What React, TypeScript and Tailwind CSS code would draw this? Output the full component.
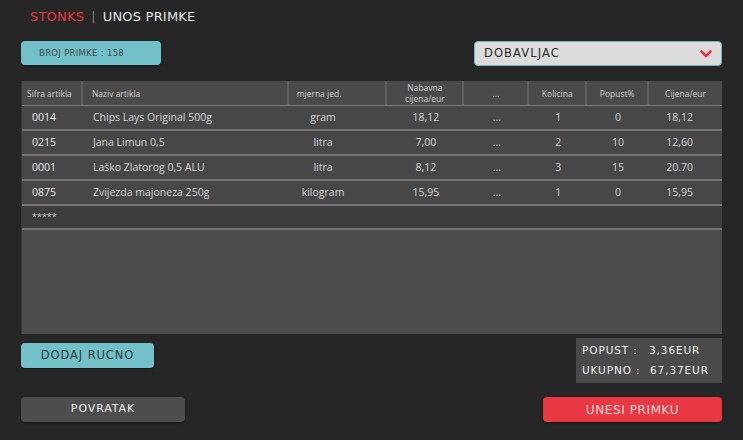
import React from "react";

const display = { fontFamily: '"DejaVu Sans", "Liberation Sans", sans-serif' };
const body = { fontFamily: '"Open Sans", "Noto Sans", sans-serif' };

interface Column {
  label: string[];
  width: string;
  head: string;
  cell: string;
}

const columns: Column[] = [
  { label: ["Sifra artikla"], width: "w-[61px]", head: "justify-start pl-[5px]", cell: "justify-start pl-[10px] text-[#f0f0f0]" },
  { label: ["Naziv artikla"], width: "w-[206px]", head: "justify-start pl-[9px]", cell: "justify-start pl-[10px]" },
  { label: ["mjerna jed."], width: "w-[99px]", head: "justify-start pl-[8px]", cell: "justify-center pr-[30px]" },
  { label: ["Nabavna", "cijena/eur"], width: "w-[77px]", head: "justify-center", cell: "justify-center" },
  { label: ["..."], width: "w-[65px]", head: "justify-center", cell: "justify-center" },
  { label: ["Kolicina"], width: "w-[58px]", head: "justify-center", cell: "justify-center" },
  { label: ["Popust%"], width: "w-[62px]", head: "justify-center", cell: "justify-center" },
  { label: ["Cijena/eur"], width: "w-[73px]", head: "justify-center", cell: "justify-center pr-[12px]" },
];

const rows = [
  ["0014", "Chips Lays Original 500g", "gram", "18,12", "...", "1", "0", "18,12"],
  ["0215", "Jana Limun 0,5", "litra", "7,00", "...", "2", "10", "12,60"],
  ["0001", "Laško Zlatorog 0,5 ALU", "litra", "8,12", "...", "3", "15", "20.70"],
  ["0875", "Zvijezda majoneza 250g", "kilogram", "15,95", "...", "1", "0", "15,95"],
];

function Chevron() {
  return (
    <svg width="12" height="8" viewBox="0 0 12 8" fill="none">
      <path d="M1.5 1.5 L6 6 L10.5 1.5" stroke="#e8383f" strokeWidth="2.6" strokeLinecap="round" strokeLinejoin="round" />
    </svg>
  );
}

export default function App() {
  return (
    <div className="w-[743px] h-[440px] bg-[#262626] px-[21px] flex flex-col overflow-hidden" style={display}>
      {/* title */}
      <div className="h-[33px] pl-[9px] flex items-center text-[13px] tracking-[0.2px]">
        <span className="text-[#e8383f]">STONKS</span>
        <span className="text-[#bdbdbd] mx-[7px] font-light">|</span>
        <span className="text-[#e6e6e6]">UNOS PRIMKE</span>
      </div>

      {/* top controls */}
      <div className="mt-[8px] flex items-start justify-between">
        <div className="w-[140px] h-[24px] rounded-[4px] bg-[#74c0c8] shadow-[0_1px_2px_rgba(0,0,0,0.5)] flex items-center pl-[18px] text-[8.5px] text-[#3b4a4d] tracking-[0.3px]">
          BROJ PRIMKE : 158
        </div>
        <div className="w-[248px] h-[25px] rounded-[4px] bg-[#dcdcdc] border border-[#6fb6bd] flex items-center justify-between pl-[9px] pr-[9px] text-[11.5px] text-[#2a2a2a] tracking-[1.1px]">
          <span>DOBAVLJAC</span>
          <Chevron />
        </div>
      </div>

      {/* table */}
      <div className="mt-[15px] h-[253px] bg-[#4d4d4d] border-l border-[#3a3a3a] flex flex-col" style={body}>
        <div className="h-[25px] bg-[#4a4a4a] flex border-b border-[#7d7d7d]">
          {columns.map((c, i) => (
            <div
              key={i}
              className={`${c.width} ${c.head} flex items-center text-[8.5px] leading-[11px] text-[#cfcfcf] ${i < columns.length - 1 ? "border-r-2 border-[#5f5f5f]" : ""}`}
            >
              <div className="text-center">
                {c.label.map((l) => (
                  <div key={l}>{l}</div>
                ))}
              </div>
            </div>
          ))}
        </div>
        {rows.map((r, ri) => (
          <div key={ri} className="h-[25px] bg-[#474747] flex border-b-2 border-[#767676]">
            {r.map((v, ci) => (
              <div
                key={ci}
                className={`${columns[ci].width} ${columns[ci].cell} flex items-center text-[10.5px] ${ci === 0 ? "" : "text-[#d6d6d6]"} ${v === "..." ? "text-[8px] text-[#bdbdbd]" : ""}`}
              >
                {v}
              </div>
            ))}
          </div>
        ))}
        <div className="h-[24px] bg-[#3d3d3d] border-b-2 border-[#767676] flex items-center pl-[10px] text-[9px] text-[#d0d0d0]">
          *****
        </div>
      </div>

      {/* bottom info */}
      <div className="mt-[4px] flex items-start justify-between">
        <div className="mt-[5px] w-[133px] h-[25px] rounded-[4px] bg-[#74c0c8] shadow-[0_1px_2px_rgba(0,0,0,0.5)] flex items-center justify-center text-[11.5px] text-[#2f3b3d] tracking-[0.9px]">
          DODAJ RUCNO
        </div>
        <div className="w-[146px] h-[45px] bg-[#4a4a4a] flex flex-col justify-center gap-[4px] pl-[6px] text-[10.5px] text-[#f0f0f0] tracking-[0.9px]">
          <div className="flex">
            <span className="w-[67px]">POPUST :</span>
            <span>3,36EUR</span>
          </div>
          <div className="flex">
            <span className="w-[68px]">UKUPNO :</span>
            <span>67,37EUR</span>
          </div>
        </div>
      </div>

      {/* actions */}
      <div className="mt-[14px] flex items-start justify-between">
        <div className="w-[164px] h-[25px] rounded-[4px] bg-[#4d4d4d] shadow-[0_1px_2px_rgba(0,0,0,0.5)] flex items-center justify-center text-[11px] text-[#eeeeee] tracking-[0.9px]">
          POVRATAK
        </div>
        <div className="w-[179px] h-[25px] rounded-[4px] bg-[#e83843] shadow-[0_1px_2px_rgba(0,0,0,0.5)] flex items-center justify-center text-[12px] text-[#f6d6d8] tracking-[0.6px]">
          UNESI PRIMKU
        </div>
      </div>
    </div>
  );
}
